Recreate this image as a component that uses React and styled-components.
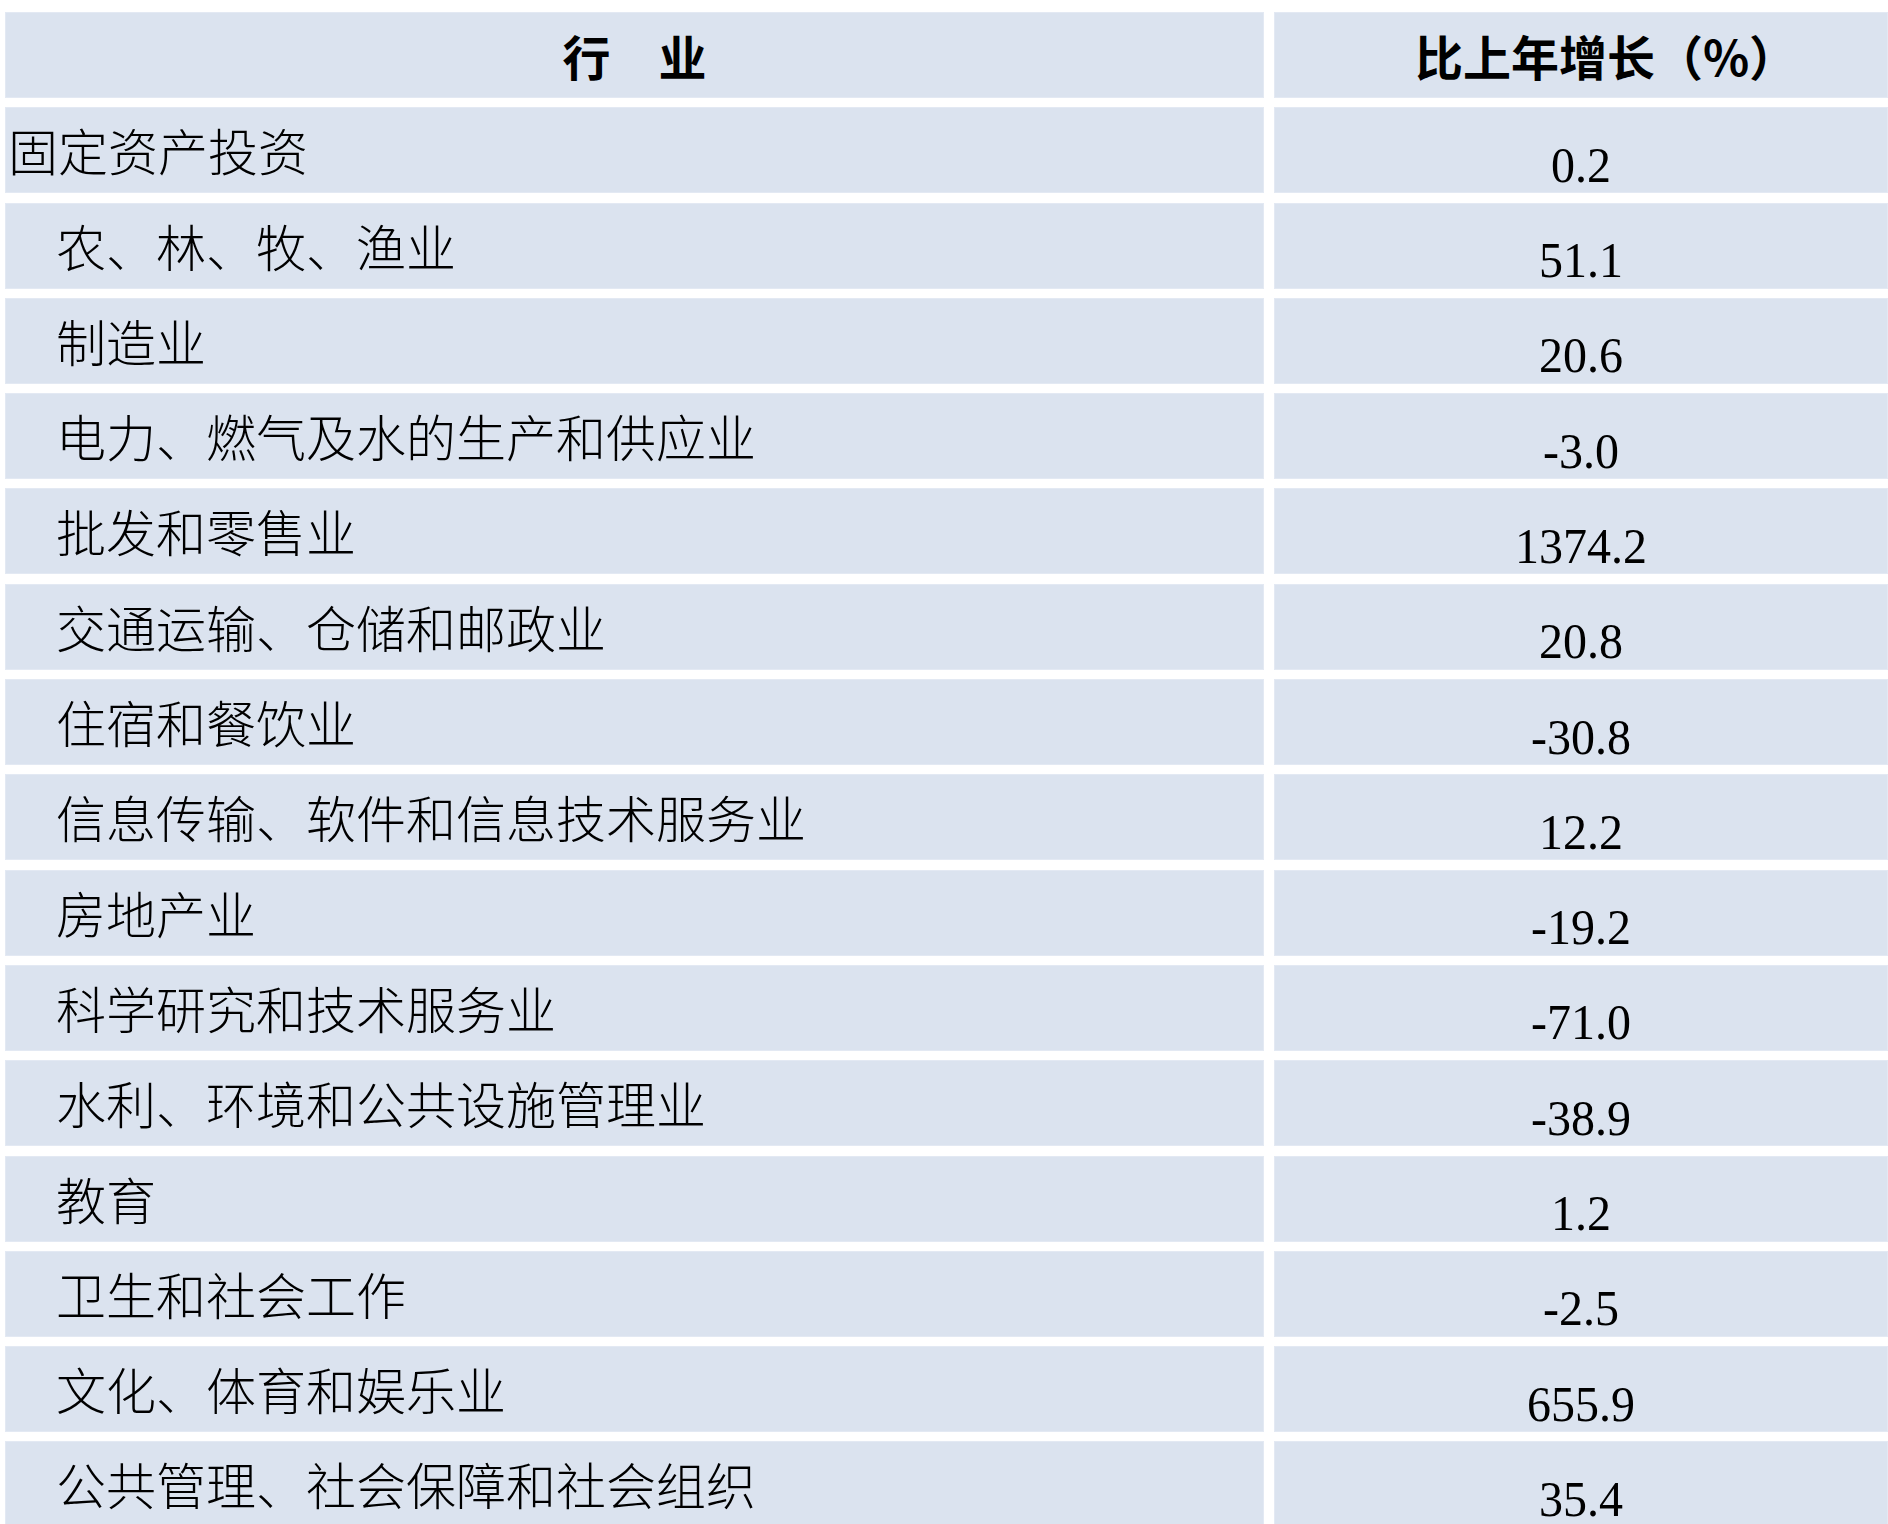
import { Fragment } from 'react';
import styled, { createGlobalStyle } from 'styled-components';

const GlobalStyle = createGlobalStyle`
  html, body {
    margin: 0;
    padding: 0;
    background: #ffffff;
    overflow: hidden;
  }
`;

const rows = [
  { name: '固定资产投资', value: '0.2', top: true },
  { name: '农、林、牧、渔业', value: '51.1' },
  { name: '制造业', value: '20.6' },
  { name: '电力、燃气及水的生产和供应业', value: '-3.0' },
  { name: '批发和零售业', value: '1374.2' },
  { name: '交通运输、仓储和邮政业', value: '20.8' },
  { name: '住宿和餐饮业', value: '-30.8' },
  { name: '信息传输、软件和信息技术服务业', value: '12.2' },
  { name: '房地产业', value: '-19.2' },
  { name: '科学研究和技术服务业', value: '-71.0' },
  { name: '水利、环境和公共设施管理业', value: '-38.9' },
  { name: '教育', value: '1.2' },
  { name: '卫生和社会工作', value: '-2.5' },
  { name: '文化、体育和娱乐业', value: '655.9' },
  { name: '公共管理、社会保障和社会组织', value: '35.4' },
];

const Page = styled.div`
  width: 1888px;
  height: 1524px;
  padding: 12px 0 0 5px;
  box-sizing: border-box;
  overflow: hidden;
`;

const Table = styled.div`
  display: grid;
  grid-template-columns: 1259px 614px;
  grid-auto-rows: 86px;
  column-gap: 10px;
  row-gap: 9.3px;
`;

const Cell = styled.div`
  display: flex;
  align-items: center;
  box-sizing: border-box;
  background: #dbe3ef;
  border: 1px solid #e3e9f3;
  color: #000000;
`;

const HeadCell = styled(Cell)`
  justify-content: center;
  font-family: 'Noto Sans CJK SC', sans-serif;
  font-weight: 700;
  font-size: 48px;
  padding-left: ${(p) => p.$shift || 0}px;
`;

const NameCell = styled(Cell)`
  padding-left: ${(p) => (p.$top ? 2 : 50)}px;
  padding-bottom: 2px;
  font-family: 'Noto Sans CJK SC', sans-serif;
  font-weight: 300;
  font-size: 50px;
  white-space: nowrap;
`;

const ValueCell = styled(Cell)`
  justify-content: center;
  padding-top: 28px;
  font-family: 'Liberation Serif', 'Times New Roman', serif;
  font-size: 48px;
`;

const Number = styled.span`
  display: inline-block;
  transform: scaleY(1.07);
`;

export default function App() {
  return (
    <>
      <GlobalStyle />
      <Page>
        <Table>
          <HeadCell>行　业</HeadCell>
          <HeadCell $shift={50}>比上年增长（%）</HeadCell>
          {rows.map((row) => (
            <Fragment key={row.name}>
              <NameCell $top={row.top}>{row.name}</NameCell>
              <ValueCell>
                <Number>{row.value}</Number>
              </ValueCell>
            </Fragment>
          ))}
        </Table>
      </Page>
    </>
  );
}
